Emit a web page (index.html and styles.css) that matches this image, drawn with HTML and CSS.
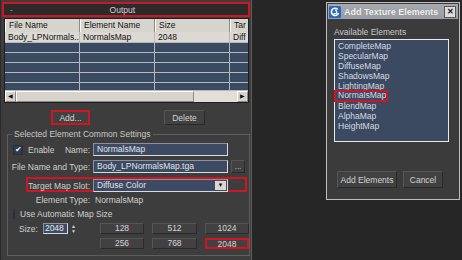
FILE: index.html
```html
<!DOCTYPE html>
<html lang="en">
<head>
    <meta charset="UTF-8">
    <title>Output - Add Texture Elements</title>
    <link rel="stylesheet" href="styles.css">
</head>
<body>
    <div class="panel">
        <div class="rollout-title">
            <span class="collapse">-</span>
            <span class="rollout-name">Output</span>
        </div>

        <div class="grid-table">
            <div class="trow thead">
                <span>File Name</span><span>Element Name</span><span>Size</span><span>Tar</span>
            </div>
            <div class="trow first">
                <span>Body_LPNormals...</span><span>NormalsMap</span><span>2048</span><span>Diff</span>
            </div>
            <div class="trow empty"><span></span><span></span><span></span><span></span></div>
            <div class="trow empty"><span></span><span></span><span></span><span></span></div>
            <div class="trow empty"><span></span><span></span><span></span><span></span></div>
            <div class="trow empty"><span></span><span></span><span></span><span></span></div>
            <div class="trow empty last"><span></span><span></span><span></span><span></span></div>
            <div class="hscroll">
                <span class="sb-btn">&#9664;</span>
                <span class="sb-thumb"></span>
                <span class="sb-track"></span>
                <span class="sb-btn">&#9654;</span>
            </div>
        </div>

        <div class="list-actions">
            <button class="btn marked add-btn">Add...</button>
            <button class="btn delete-btn">Delete</button>
        </div>

        <fieldset class="settings">
            <legend>Selected Element Common Settings</legend>

            <div class="frow">
                <div class="flabel split">
                    <span class="check-item"><span class="checkbox checked">&#10004;</span>Enable</span>
                    <span>Name:</span>
                </div>
                <div class="field">NormalsMap</div>
            </div>

            <div class="frow">
                <div class="flabel">File Name and Type:</div>
                <div class="field">Body_LPNormalsMap.tga</div>
                <button class="btn browse">...</button>
            </div>

            <div class="frow slot">
                <div class="flabel">Target Map Slot:</div>
                <div class="field dropdown">
                    <span>Diffuse Color</span>
                    <span class="drop-arrow">&#9660;</span>
                </div>
            </div>

            <div class="frow info">
                <div class="flabel">Element Type:</div>
                <div class="value">NormalsMap</div>
            </div>

            <div class="frow info">
                <span class="check-item"><span class="checkbox"></span>Use Automatic Map Size</span>
            </div>

            <div class="size-grid">
                <div class="size-label">
                    <span>Size:</span>
                    <span class="spinner-field">2048</span>
                    <span class="spinner-arrows"><i>&#9650;</i><i>&#9660;</i></span>
                </div>
                <button class="btn">128</button>
                <button class="btn">512</button>
                <button class="btn">1024</button>
                <div></div>
                <button class="btn">256</button>
                <button class="btn">768</button>
                <button class="btn marked">2048</button>
            </div>
        </fieldset>
    </div>

    <div class="desktop">
        <div class="dialog">
            <div class="titlebar">
                <svg class="app-icon" width="12" height="12" viewBox="0 0 12 12">
                    <rect x="0" y="0" width="12" height="12" rx="1.5" fill="#2f66b8"/>
                    <path d="M8.6 3.4 A3.6 3.6 0 1 0 9.4 7" fill="none" stroke="#fff" stroke-width="1.6"/>
                    <path d="M6 4.2 A1.8 1.8 0 1 1 4.6 7.2" fill="none" stroke="#fff" stroke-width="1.2"/>
                </svg>
                <span class="title">Add Texture Elements</span>
                <span class="close">&#10005;</span>
            </div>
            <div class="dialog-body">
                <div class="list-caption">Available Elements</div>
                <ul class="element-list">
                    <li>CompleteMap</li>
                    <li>SpecularMap</li>
                    <li>DiffuseMap</li>
                    <li>ShadowsMap</li>
                    <li>LightingMap</li>
                    <li class="marked-item">NormalsMap</li>
                    <li>BlendMap</li>
                    <li>AlphaMap</li>
                    <li>HeightMap</li>
                </ul>
                <div class="dialog-actions">
                    <button class="btn add-elements">Add Elements</button>
                    <button class="btn cancel">Cancel</button>
                </div>
            </div>
        </div>
    </div>
</body>
</html>
```

FILE: styles.css
```css
body {
    margin: 0;
    width: 462px;
    height: 260px;
    overflow: hidden;
    display: flex;
    background: #262626;
    font-family: "Liberation Sans", Arial, sans-serif;
    font-size: 8px;
    color: #cfcfcf;
}

.panel {
    width: 250px;
    height: 260px;
    background: #3d3d3d;
    border-right: 1px solid #5c5c5c;
    border-left: 1px solid #2a2a2a;
    box-sizing: content-box;
}

.rollout-title {
    margin: 2px 1px 0 1px;
    height: 15px;
    box-sizing: border-box;
    border: 2px solid #d01424;
    background: #2b2b2b;
    display: flex;
    align-items: center;
}

.collapse {
    padding-left: 6px;
    color: #bdbdbd;
}

.rollout-name {
    flex: 1;
    text-align: center;
    padding-right: 16px;
    color: #d0d0d0;
    font-size: 8.5px;
}

/* element table */
.grid-table {
    margin: 1px 0 0 3px;
    width: 245px;
    background: #3a4a60;
    border: 1px solid #1e1e1e;
    box-sizing: border-box;
}

.trow {
    display: grid;
    grid-template-columns: 75px 75px 75px 1fr;
    height: 10px;
    border-top: 1px solid #b4b8bf;
    overflow: hidden;
}

.trow span {
    border-right: 1px solid #b4b8bf;
    padding-left: 3px;
    line-height: 10px;
    white-space: nowrap;
    overflow: hidden;
}

.trow span:last-child {
    border-right: none;
}

.thead {
    height: 13px;
    border-top: none;
    background: #d7d4cd;
    color: #111;
}

.thead span {
    line-height: 13px;
    border-right: 1px solid #8d8a84;
    border-left: 1px solid #fafaf7;
    font-size: 8.5px;
}

.first {
    height: 10px;
    border-top: none;
    background: #dcd9d2;
    color: #111;
}

.first span {
    font-size: 8.5px;
}

.empty {
    height: 9px;
}

.last {
    height: 7px;
}

.hscroll {
    display: flex;
    height: 11px;
    background: #e2dfd8;
    border-top: 1px solid #b4b8bf;
}

.sb-btn {
    width: 11px;
    font-size: 6px;
    line-height: 9px;
    text-align: center;
    color: #111;
    background: #d7d4cd;
    border: 1px solid #8d8a84;
    border-top-color: #fff;
    border-left-color: #fff;
    box-sizing: border-box;
}

.sb-thumb {
    width: 178px;
    background: #d7d4cd;
    border: 1px solid #8d8a84;
    border-top-color: #fff;
    border-left-color: #fff;
    box-sizing: border-box;
}

.sb-track {
    flex: 1;
}

/* buttons */
.btn {
    font-family: inherit;
    font-size: 8.5px;
    color: #d4d4d4;
    background: #414141;
    border: 1px solid #2a2a2a;
    border-top-color: #555;
    border-left-color: #555;
    padding: 0;
    box-sizing: border-box;
}

.marked {
    border: 2px solid #d01424;
}

.list-actions {
    display: flex;
    gap: 74px;
    margin-top: 7px;
    padding-left: 50px;
}

.add-btn {
    width: 39px;
    height: 15px;
}

.delete-btn {
    width: 41px;
    height: 15px;
}

/* settings group */
.settings {
    margin: 4px 0 0 6px;
    width: 241px;
    height: 127px;
    box-sizing: border-box;
    padding: 0;
    border: 1px solid #5e5e5e;
    display: flex;
    flex-direction: column;
}

.settings legend {
    margin-left: 4px;
    padding: 0 2px;
    line-height: 11px;
    font-size: 8.5px;
    color: #c8c8c8;
}

.frow {
    display: grid;
    grid-template-columns: 82px 135px 14px;
    column-gap: 3px;
    height: 13px;
    margin-top: 4px;
    align-items: center;
    font-size: 8.5px;
}

.frow:first-of-type {
    margin-top: 3px;
}

.flabel {
    text-align: right;
    white-space: nowrap;
}

.split {
    display: flex;
    justify-content: space-between;
    padding-left: 5px;
}

.check-item {
    display: flex;
    align-items: center;
    gap: 5px;
}

.checkbox {
    width: 8px;
    height: 8px;
    background: #3b4a66;
    border: 1px solid #2a2f3a;
    color: #f4f4f4;
    font-size: 8px;
    line-height: 8px;
    text-align: center;
}

.checkbox.checked {
    background: #2e3a50;
}

.field {
    height: 13px;
    box-sizing: border-box;
    background: #3c4b63;
    border: 1px solid #d9dbde;
    border-top-color: #8c9099;
    border-left-color: #8c9099;
    color: #e2e2e2;
    padding-left: 3px;
    line-height: 11px;
    white-space: nowrap;
    overflow: hidden;
}

.browse {
    height: 13px;
    width: 14px;
    font-size: 8px;
    line-height: 8px;
}

.slot {
    margin-left: 18px;
    width: 221px;
    height: 15px;
    box-sizing: border-box;
    border: 2px solid #d01424;
    grid-template-columns: 62px 135px;
}

.dropdown {
    display: flex;
    justify-content: space-between;
    padding-right: 1px;
}

.drop-arrow {
    width: 11px;
    height: 9px;
    margin-top: 1px;
    background: #dad7d0;
    color: #111;
    font-size: 6px;
    line-height: 9px;
    text-align: center;
}

.info {
    height: 12px;
    margin-top: 2px;
}

.info .value {
    padding-left: 2px;
}

.info .check-item {
    padding-left: 5px;
    white-space: nowrap;
}

.size-grid {
    display: grid;
    grid-template-columns: 84px 44px 45px 44px;
    grid-auto-rows: 11px;
    column-gap: 8px;
    row-gap: 4px;
    margin-top: 3px;
    font-size: 8.5px;
}

.size-grid .btn {
    height: 11px;
    line-height: 9px;
}

.size-label {
    display: flex;
    align-items: center;
    padding-left: 11px;
}

.spinner-field {
    margin-left: 5px;
    width: 25px;
    height: 11px;
    box-sizing: border-box;
    background: #3c4b63;
    border: 1px solid #d9dbde;
    border-top-color: #8c9099;
    border-left-color: #8c9099;
    color: #e8e8e8;
    line-height: 9px;
    padding-left: 1px;
}

.spinner-arrows {
    display: flex;
    flex-direction: column;
    margin-left: 3px;
    font-size: 5px;
    line-height: 5px;
    color: #cfcfcf;
}

.spinner-arrows i {
    font-style: normal;
}

/* dialog */
.desktop {
    flex: 1;
    padding: 2px 0 0 74px;
}

.dialog {
    width: 134px;
    height: 198px;
    box-sizing: border-box;
    border: 1px solid #bdbdbd;
    background: #3b3b3b;
    display: flex;
    flex-direction: column;
}

.titlebar {
    height: 15px;
    margin: 1px 1px 0 1px;
    background: linear-gradient(#a6a9ae, #9a9da3);
    display: flex;
    align-items: center;
    padding-left: 1px;
    gap: 3px;
}

.title {
    flex: 1;
    color: #f4f4f4;
    font-weight: bold;
    font-size: 9px;
    white-space: nowrap;
    text-shadow: 0 0 1px #777;
}

.close {
    width: 10px;
    height: 10px;
    margin-right: 2px;
    background: #dcdcdc;
    border: 1px solid #555;
    color: #111;
    font-size: 8px;
    line-height: 10px;
    text-align: center;
    font-weight: bold;
}

.dialog-body {
    flex: 1;
    padding: 8px 0 0 7px;
}

.list-caption {
    line-height: 11px;
    font-size: 8.5px;
    color: #c8c8c8;
}

.element-list {
    list-style: none;
    margin: 1px 0 0 0;
    padding: 1px 0 0 0;
    width: 115px;
    height: 103px;
    box-sizing: border-box;
    background: #3b4a61;
    border: 1px solid #e8e8e8;
    color: #d6dbe2;
    font-size: 8.5px;
}

.element-list li {
    line-height: 10px;
    height: 10px;
    padding-left: 3px;
    width: 52px;
    box-sizing: border-box;
    white-space: nowrap;
}

.element-list .marked-item {
    line-height: 9px;
    outline: 2px solid #d01424;
    outline-offset: -1px;
}

.dialog-actions {
    display: flex;
    gap: 6px;
    margin: 29px 0 0 3px;
}

.add-elements {
    width: 60px;
    height: 17px;
}

.cancel {
    width: 40px;
    height: 17px;
}
```
